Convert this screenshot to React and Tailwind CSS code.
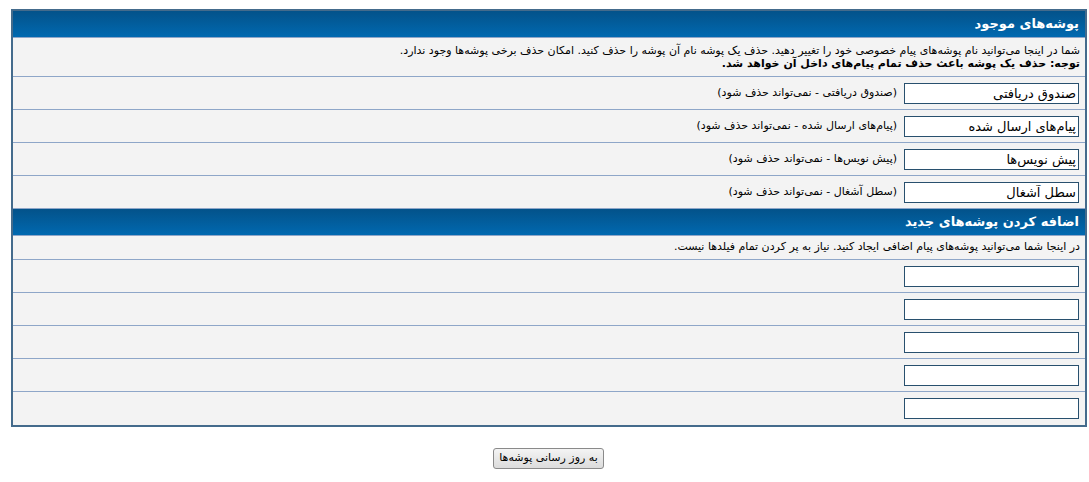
const folders = [
  { name: 'صندوق دریافتی', note: '(صندوق دریافتی - نمی‌تواند حذف شود)' },
  { name: 'پیام‌های ارسال شده', note: '(پیام‌های ارسال شده - نمی‌تواند حذف شود)' },
  { name: 'پیش نویس‌ها', note: '(پیش نویس‌ها - نمی‌تواند حذف شود)' },
  { name: 'سطل آشغال', note: '(سطل آشغال - نمی‌تواند حذف شود)' },
]

const font = { fontFamily: '"DejaVu Sans", Tahoma, sans-serif' }

function Head({ children }) {
  return (
    <div className="h-[27px] px-[6px] flex items-center bg-gradient-to-b from-[#03528a] to-[#0069b0] text-white text-[13px] font-bold border-b border-[#8ea6c8]">
      {children}
    </div>
  )
}

function Row({ value, note, last }) {
  return (
    <div className={`h-[33px] flex items-center gap-[7px] pr-[6px] bg-[#f3f3f3] ${last ? '' : 'border-b border-[#8ea6c8]'}`}>
      <input
        defaultValue={value}
        dir="rtl"
        className="w-[175px] h-[21px] border border-[#28506e] bg-white px-[2px] text-[13px] text-black outline-none"
        style={font}
      />
      {note && <span className="text-[11px] text-black">{note}</span>}
    </div>
  )
}

export default function App() {
  return (
    <div dir="rtl" className="bg-white w-[1089px] h-[482px] pt-[9px]" style={font}>
      <div className="ml-[11px] mr-[2px] w-[1076px] border-2 border-[#446b8c] bg-[#f3f3f3]">
        <Head>پوشه‌های موجود</Head>
        <div className="h-[39px] px-[5px] pt-[6px] text-[11px] leading-[13px] text-black border-b border-[#8ea6c8]">
          <div>شما در اینجا می‌توانید نام پوشه‌های پیام خصوصی خود را تغییر دهید. حذف یک پوشه نام آن پوشه را حذف کنید. امکان حذف برخی پوشه‌ها وجود ندارد.</div>
          <div className="font-bold">توجه: حذف یک پوشه باعث حذف تمام پیام‌های داخل آن خواهد شد.</div>
        </div>
        {folders.map(f => (
          <Row key={f.name} value={f.name} note={f.note} />
        ))}
        <Head>اضافه کردن پوشه‌های جدید</Head>
        <div className="h-[24px] px-[5px] flex items-center text-[11px] text-black border-b border-[#8ea6c8]">
          در اینجا شما می‌توانید پوشه‌های پیام اضافی ایجاد کنید. نیاز به پر کردن تمام فیلدها نیست.
        </div>
        {[0, 1, 2, 3, 4].map(i => (
          <Row key={i} value="" last={i === 4} />
        ))}
      </div>
      <div className="w-full pl-[8px] flex justify-center mt-[21px]">
        <button
          className="h-[21px] px-[5px] text-[11px] text-black rounded-[3px] border border-[#8a8a8a] bg-gradient-to-b from-[#f4f4f4] to-[#dcdcdc]"
          style={font}
        >
          به روز رسانی پوشه‌ها
        </button>
      </div>
    </div>
  )
}
